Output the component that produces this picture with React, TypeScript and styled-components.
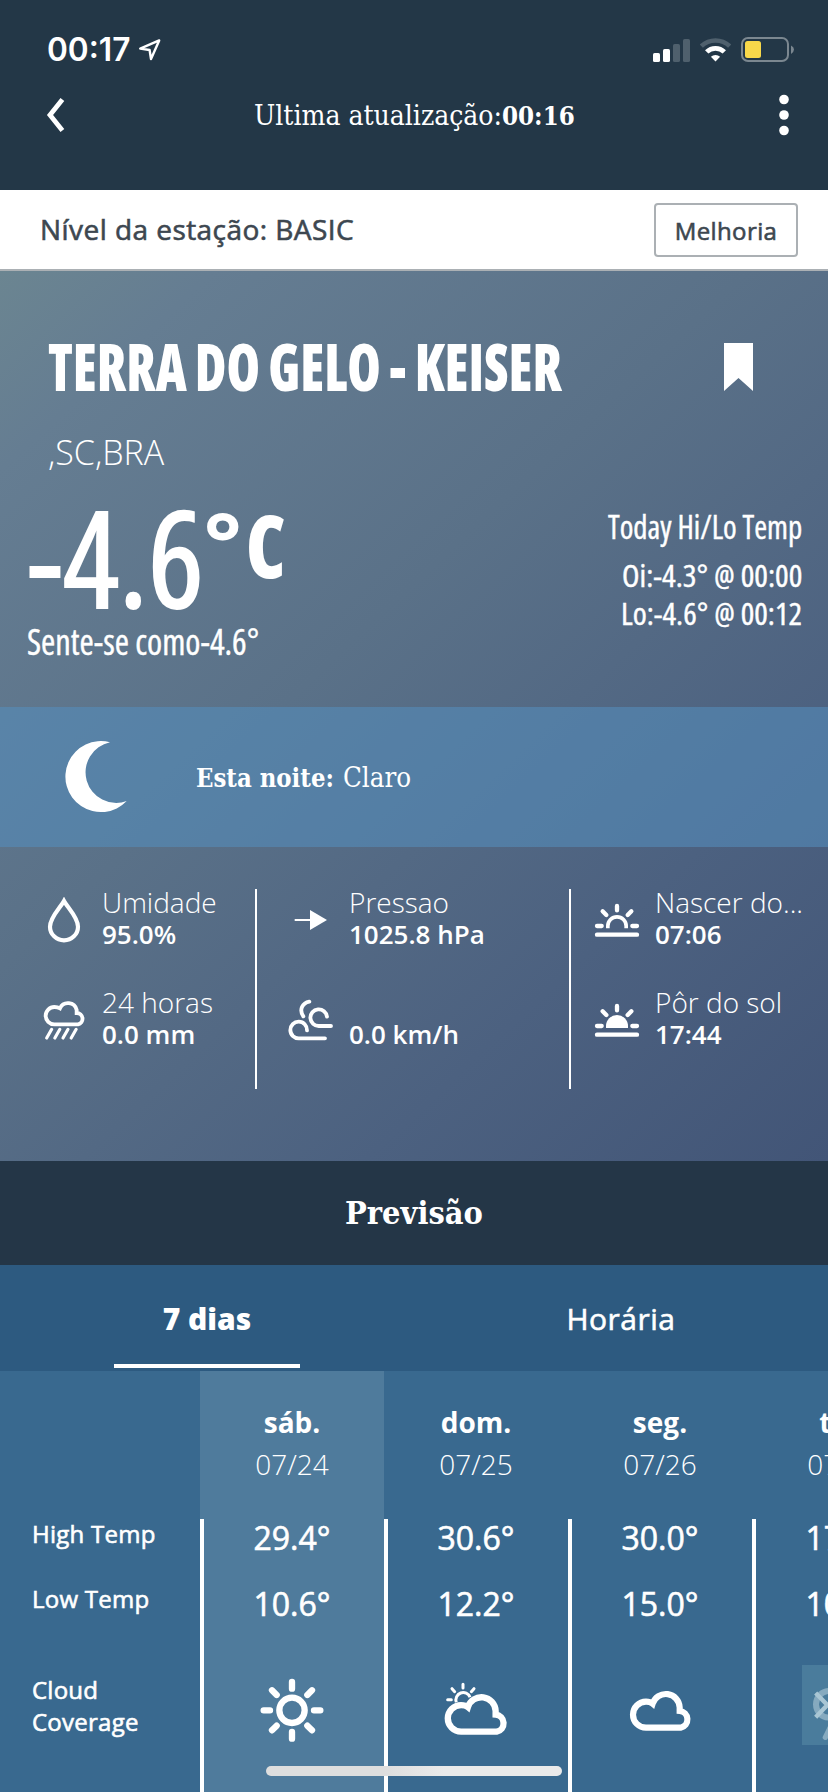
import React, { ReactNode, useLayoutEffect, useRef, useState } from "react";
import styled, { createGlobalStyle, css } from "styled-components";

const SANS = '"Open Sans", "Noto Sans", sans-serif';
const NARROW = '"Open Sans", "Liberation Sans Narrow", sans-serif';
const SERIF = '"DejaVu Serif Condensed", "DejaVu Serif", serif';

const GlobalStyle = createGlobalStyle`
  * { box-sizing: border-box; }
  html, body { margin: 0; padding: 0; }
  body { width: 828px; height: 1792px; overflow: hidden; background: #39698f; color: #fff; font-family: ${SANS}; }
`;

/* Open Sans has no installed 500 weight; a hairline stroke thickens the regular. */
const medium = css`
  font-weight: 400;
  -webkit-text-stroke: 0.6px currentColor;
`;

type FitProps = {
  w: number;
  size: number;
  lh: number;
  family?: string;
  weight?: number;
  stretch?: number;
  stroke?: number;
  words?: number;
  children: ReactNode;
};

const FitBox = styled.span<{ $w: number; $lh: number }>`
  display: block;
  flex: none;
  width: ${(p) => p.$w}px;
  height: ${(p) => p.$lh}px;
  line-height: ${(p) => p.$lh}px;
  white-space: pre;
`;
const FitInner = styled.span<{
  $size: number;
  $family: string;
  $weight: number;
  $stretch: number;
  $stroke: number;
  $words: number;
}>`
  display: inline-block;
  vertical-align: top;
  transform-origin: 0 0;
  font-family: ${(p) => p.$family};
  font-size: ${(p) => p.$size}px;
  font-weight: ${(p) => p.$weight};
  font-stretch: ${(p) => p.$stretch}%;
  word-spacing: ${(p) => p.$words}em;
  -webkit-text-stroke: ${(p) => p.$stroke}px currentColor;
`;

/* One line of text condensed horizontally to an exact width. */
function Fit({
  w,
  size,
  lh,
  family = NARROW,
  weight = 400,
  stretch = 100,
  stroke = 0,
  words = 0,
  children,
}: FitProps) {
  const ref = useRef<HTMLSpanElement>(null);
  const [scale, setScale] = useState(1);
  useLayoutEffect(() => {
    if (ref.current) setScale(w / ref.current.offsetWidth);
  }, [w]);
  return (
    <FitBox $w={w} $lh={lh}>
      <FitInner
        ref={ref}
        $size={size}
        $family={family}
        $weight={weight}
        $stretch={stretch}
        $stroke={stroke}
        $words={words}
        style={{ transform: `scaleX(${scale})` }}
      >
        {children}
      </FitInner>
    </FitBox>
  );
}

const Screen = styled.main`
  width: 828px;
  height: 1792px;
  overflow: hidden;
  display: flex;
  flex-direction: column;
`;

/* ---------- header ---------- */
const Header = styled.header`
  height: 190px;
  flex: none;
  background: #233747;
`;
const StatusBar = styled.div`
  height: 80px;
  padding: 20px 34px 0 47px;
  display: flex;
  align-items: center;
  justify-content: space-between;
`;
const StatusGroup = styled.div<{ $gap: number }>`
  display: flex;
  align-items: center;
  gap: ${(p) => p.$gap}px;
`;
const NavBar = styled.nav`
  height: 70px;
  padding: 0 36px 0 46px;
  display: flex;
  align-items: center;
  justify-content: space-between;
`;
const NavTitle = styled.h1`
  margin: 0;
  display: flex;
  padding: 2px 14px 0 0;
`;

/* ---------- station level ---------- */
const LevelBar = styled.section`
  height: 81px;
  flex: none;
  background: #fff;
  border-bottom: 2px solid #abb0b4;
  padding: 0 30px 0 40px;
  display: flex;
  align-items: center;
  justify-content: space-between;
  color: #3d4750;
`;
const LevelText = styled.span`
  font-size: 28px;
  letter-spacing: 0.45px;
  padding-bottom: 2px;
  ${medium}
`;
const UpgradeButton = styled.button`
  width: 144px;
  height: 54px;
  margin-top: 1px;
  padding: 1px 0 0;
  border: 2px solid #abb0b4;
  border-radius: 4px;
  background: #fff;
  color: #3d4750;
  font-family: ${SANS};
  font-size: 24px;
  letter-spacing: 0.4px;
  ${medium}
`;

/* ---------- current conditions ---------- */
const Hero = styled.section`
  height: 890px;
  flex: none;
  background: linear-gradient(137deg, #6b8591 0%, #657d92 12%, #5a7188 42%, #4c6180 74%, #425577 100%);
`;
const Summary = styled.div`
  height: 436px;
`;
const TitleRow = styled.div`
  height: 132px;
  padding: 49px 75px 0 48px;
  display: flex;
  justify-content: space-between;
`;
const BookmarkIcon = styled.svg`
  margin-top: 23px;
`;
const Region = styled.p`
  margin: 0;
  padding-left: 48px;
  height: 90px;
  line-height: 98px;
  font-size: 34px;
  font-weight: 300;
`;
const TempRow = styled.div`
  display: flex;
  justify-content: space-between;
  padding: 0 26px 0 27px;
`;
const TempBlock = styled.div`
  height: 192px;
`;
const BigTemp = styled.div`
  display: flex;
  height: 120px;
`;
const Unit = styled.div`
  display: flex;
  gap: 4px;
`;
const HiLo = styled.div`
  display: flex;
  flex-direction: column;
  align-items: flex-end;
  padding-top: 14px;
`;
const HiLoRows = styled.div`
  display: flex;
  flex-direction: column;
  align-items: flex-end;
  margin-top: 9px;
`;
const Tonight = styled.div`
  height: 140px;
  background: rgba(84, 141, 188, 0.58);
  display: flex;
  align-items: center;
  padding-left: 62px;
`;
const TonightText = styled.p`
  margin: 1px 0 0 65px;
  display: flex;
  gap: 9px;
`;
const Stats = styled.div`
  display: flex;
  padding-top: 42px;
`;
const StatColumn = styled.div<{ $w: number; $line?: boolean }>`
  width: ${(p) => p.$w}px;
  height: 200px;
  flex: none;
  border-right: ${(p) => (p.$line ? "2px solid #fff" : "0")};
`;
const Stat = styled.div<{ $icon: number }>`
  height: 100px;
  display: grid;
  grid-template-columns: ${(p) => p.$icon}px 1fr;
`;
const StatIcon = styled.div<{ $left: number }>`
  padding-left: ${(p) => p.$left}px;
  height: 62px;
  display: flex;
  align-items: center;
`;
const StatLabel = styled.div`
  height: 29px;
  line-height: 27px;
  font-size: 28px;
  font-weight: 300;
  white-space: nowrap;
`;
const StatValue = styled.div`
  height: 32px;
  line-height: 32px;
  font-size: 26px;
  font-weight: 600;
  white-space: nowrap;
`;

/* ---------- forecast ---------- */
const ForecastTitle = styled.h2`
  margin: 0;
  height: 104px;
  flex: none;
  background: #243647;
  display: flex;
  align-items: center;
  justify-content: center;
`;
const Tabs = styled.div`
  height: 106px;
  flex: none;
  background: #2d5a80;
  display: flex;
`;
const Tab = styled.div`
  width: 414px;
  height: 103px;
  display: flex;
  justify-content: center;
`;
const TabLabel = styled.span<{ $active?: boolean }>`
  width: 186px;
  line-height: 107px;
  height: 103px;
  text-align: center;
  font-size: 30px;
  ${(p) =>
    p.$active
      ? css`
          font-weight: 800;
          border-bottom: 4px solid #fff;
        `
      : css`
          letter-spacing: 0.5px;
          ${medium}
        `}
`;
const Table = styled.section`
  position: relative;
  flex: 1;
  display: flex;
  background: #39698f;
`;
const Labels = styled.div`
  width: 200px;
  flex: none;
  padding: 147px 0 0 32px;
  font-size: 24px;
  letter-spacing: 0.25px;
  line-height: 32px;
  ${medium}
`;
const RowLabel = styled.div<{ $h: number }>`
  height: ${(p) => p.$h}px;
`;
const Day = styled.div<{ $today?: boolean }>`
  width: 184px;
  flex: none;
  background: ${(p) => (p.$today ? "#4f7b9c" : "transparent")};
  text-align: center;
  display: flex;
  flex-direction: column;
`;
const DayHead = styled.div`
  height: 148px;
  padding-top: 30px;
`;
const DayName = styled.div`
  font-size: 28px;
  font-weight: 700;
  line-height: 42px;
`;
const DayDate = styled.div`
  font-size: 28px;
  font-weight: 300;
  line-height: 42px;
`;
const DayBody = styled.div`
  flex: 1;
  border-left: 4px solid #fff;
  padding-right: 4px;
`;
const Temp = styled.div`
  height: 66px;
  line-height: 38px;
  font-size: 32px;
  ${medium}
`;
const DayIcon = styled.div`
  margin-top: 14px;
  height: 80px;
  display: flex;
  justify-content: center;
`;
const HomeIndicator = styled.div`
  position: absolute;
  left: 266px;
  bottom: 16px;
  width: 296px;
  height: 10px;
  border-radius: 5px;
  background: linear-gradient(90deg, #dedede 0 40%, #eaeaea 60%);
`;

/* ---------- icons ---------- */
const line = { fill: "none", stroke: "#fff", strokeLinecap: "round" as const };

const LocationArrow = () => (
  <svg width="24" height="24" viewBox="0 0 24 24">
    <path d="M21.2 2.4 L2.2 10.6 L11.6 12 L13 21 Z" fill="none" stroke="#fff" strokeWidth="2.4" strokeLinejoin="round" />
  </svg>
);
const Signal = () => (
  <svg width="37" height="23" viewBox="0 0 37 23">
    <rect x="0" y="14" width="7" height="9" rx="1.6" fill="#fff" />
    <rect x="10" y="10" width="7" height="13" rx="1.6" fill="#fff" />
    <rect x="20" y="5" width="7" height="18" rx="1.6" fill="#4f606d" />
    <rect x="30" y="0" width="7" height="23" rx="1.6" fill="#4f606d" />
  </svg>
);
const Wifi = () => (
  <svg width="31" height="24" viewBox="0.5 0 31 24">
    <path d="M1.8 8.2 A20.5 20.5 0 0 1 30.2 8.2" fill="none" stroke="#4f606d" strokeWidth="4.6" />
    <path d="M7.2 13.9 A12.6 12.6 0 0 1 24.8 13.9" fill="none" stroke="#fff" strokeWidth="4.8" />
    <path d="M11.4 18.8 A6.8 6.8 0 0 1 20.6 18.8 L16 23.6 Z" fill="#fff" />
  </svg>
);
const Battery = () => (
  <svg width="53" height="26" viewBox="0 0 53 26">
    <rect x="1" y="1" width="46" height="23" rx="6" fill="none" stroke="#7b8790" strokeWidth="2" />
    <rect x="4" y="4" width="16" height="17" rx="2.5" fill="#f8d84a" />
    <path d="M50 8.5 Q53 10 53 12.5 T50 17 Z" fill="#7b8790" />
  </svg>
);
const BackIcon = () => (
  <svg width="20" height="34" viewBox="0 0 20 34">
    <path d="M16.4 1.5 L4 17 L16.4 32.5" fill="none" stroke="#fff" strokeWidth="4.8" />
  </svg>
);
const MoreIcon = () => (
  <svg width="16" height="42" viewBox="0 0 16 42">
    <circle cx="8" cy="5.5" r="4.8" fill="#fff" />
    <circle cx="8" cy="21" r="4.8" fill="#fff" />
    <circle cx="8" cy="36.5" r="4.8" fill="#fff" />
  </svg>
);
const Moon = () => (
  <svg width="69" height="76" viewBox="62 739 69 76">
    <path d="M110 742.3 A35.5 35.5 0 1 0 126.7 801 A30.6 30.6 0 1 1 110 742.3 Z" fill="#fff" />
  </svg>
);
const Drop = () => (
  <svg width="34" height="46" viewBox="141 591 102 138">
    <path d="M192 603 C182 622 150 652 150 680 A42 41 0 0 0 234 680 C234 652 202 622 192 603 Z" fill="none" stroke="#fff" strokeWidth="12.5" />
  </svg>
);
const Rain = () => (
  <svg width="44" height="42" viewBox="126 897 132 126">
    <path d="M163 973 A26 26 0 0 1 163 921 Q173 921 180 925 A26.5 26.5 0 0 1 230 930 V939 A17.2 17.2 0 0 1 234 973 Z" fill="none" stroke="#fff" strokeWidth="11.5" />
    {[0, 24.5, 49, 73.5].map((x) => (
      <path key={x} d={`M${155 + x} 988 L${140 + x} 1014`} {...line} strokeWidth="9.5" />
    ))}
  </svg>
);
const PressureArrow = () => (
  <svg width="34" height="22" viewBox="882 627 102 66">
    <path d="M884 660 H934" stroke="#fff" strokeWidth="6" />
    <path d="M930 630 L981 660 L930 690 Z" fill="#fff" />
  </svg>
);
const Wind = () => (
  <svg width="46" height="42" viewBox="864 897 138 126">
    <path d="M928 905 C908 909 896 928 910 949" {...line} strokeWidth="11.5" />
    <path d="M981 950 A25 25 0 1 0 957 978 H993" {...line} strokeWidth="11.5" />
    <path d="M921 991 A25 25 0 1 0 897 1015 H975" {...line} strokeWidth="11.5" />
  </svg>
);
const SunHorizon = ({ filled }: { filled?: boolean }) => (
  <svg width="46" height="35" viewBox="540 187 138 105">
    <path d="M549 282 H669 M609 196 V209 M566 212 L577 223 M652 212 L641 223 M549 256 H563 M655 256 H669" {...line} strokeWidth="13" />
    {filled ? (
      <path d="M576 262 V256 A33 33 0 0 1 642 256 V262 Z" fill="#fff" />
    ) : (
      <path d="M581.5 263 V256 A27.5 27.5 0 0 1 636.5 256 V263" fill="none" stroke="#fff" strokeWidth="11" />
    )}
  </svg>
);
const CLOUD =
  "M694 683 A39 39 0 0 1 694 605 Q707 605 714 611 A41.5 41.5 0 0 1 795 622 V633 A25.3 25.3 0 0 1 798 683 Z";
const Sunny = () => (
  <svg width="64" height="80" viewBox="780 495 192 240">
    <circle cx="876" cy="631" r="38" fill="none" stroke="#fff" strokeWidth="19" />
    <path d="M876 546 V566 M876 696 V716 M791 631 H810 M942 631 H961 M816 571 L830 585 M936 571 L922 585 M816 691 L830 677 M936 691 L922 677" {...line} strokeWidth="19" />
  </svg>
);
const PartlyCloudy = () => (
  <svg width="66" height="80" viewBox="87 495 198 240">
    <path d="M127 607 A21 21 0 1 1 168 592" fill="none" stroke="#fff" strokeWidth="9" />
    <path d="M147 553 V564 M114 566 L122 575 M180 566 L172 575 M101 599 H112" {...line} strokeWidth="9" />
    <g transform="translate(-570 -5) scale(1.025)">
      <path d={CLOUD} fill="none" stroke="#fff" strokeWidth="18.5" />
    </g>
  </svg>
);
const Cloudy = () => (
  <svg width="64" height="80" viewBox="640 495 192 240">
    <path d={CLOUD} fill="none" stroke="#fff" strokeWidth="18.5" />
  </svg>
);
const MissingTile = styled.div`
  width: 84px;
  height: 80px;
  flex: none;
  background: #4a7c9c;
`;
const Missing = () => (
  <MissingTile>
    <svg width="84" height="80" viewBox="1164 495 252 240">
      <circle cx="1246" cy="613" r="40" fill="none" stroke="#86aabf" strokeWidth="18" />
      <path d="M1234 712 L1260 660" stroke="#86aabf" strokeWidth="16" strokeLinecap="round" />
      <path d="M1205 579 L1240 615 L1205 652" fill="none" stroke="#a9c6d4" strokeWidth="13" />
    </svg>
  </MissingTile>
);

const days = [
  { name: "sáb.", date: "07/24", hi: "29.4°", lo: "10.6°", icon: <Sunny />, today: true },
  { name: "dom.", date: "07/25", hi: "30.6°", lo: "12.2°", icon: <PartlyCloudy /> },
  { name: "seg.", date: "07/26", hi: "30.0°", lo: "15.0°", icon: <Cloudy /> },
  { name: "ter.", date: "07/27", hi: "17.0°", lo: "10.0°", icon: <Missing /> },
];

export default function App() {
  return (
    <Screen>
      <GlobalStyle />
      <Header>
        <StatusBar>
          <StatusGroup $gap={8}>
            <Fit w={83} size={32} lh={40} family="Inter, sans-serif" weight={600}>00:17</Fit>
            <LocationArrow />
          </StatusGroup>
          <StatusGroup $gap={10}>
            <Signal />
            <Wifi />
            <Battery />
          </StatusGroup>
        </StatusBar>
        <NavBar>
          <BackIcon />
          <NavTitle>
            <Fit w={248} size={27} lh={40} family={SERIF}>Ultima atualização:</Fit>
            <Fit w={73} size={26} lh={40} family={SERIF} weight={700}>00:16</Fit>
          </NavTitle>
          <MoreIcon />
        </NavBar>
      </Header>

      <LevelBar>
        <LevelText>Nível da estação: BASIC</LevelText>
        <UpgradeButton>Melhoria</UpgradeButton>
      </LevelBar>

      <Hero>
        <Summary>
          <TitleRow>
            <Fit w={514} size={66} lh={90} weight={800} stretch={75} words={-0.025}>TERRA DO GELO - KEISER</Fit>
            <BookmarkIcon width="29" height="48" viewBox="0 0 29 48">
              <path d="M0 0 H29 V48 L14.5 35 L0 48 Z" fill="#fff" />
            </BookmarkIcon>
          </TitleRow>
          <Region>,SC,BRA</Region>
          <TempRow>
            <TempBlock>
              <BigTemp>
                <Fit w={177} size={133} lh={127} weight={400} stretch={75} stroke={2}>-4.6</Fit>
                <Unit>
                  <Fit w={38} size={92} lh={106} weight={400} stretch={75} stroke={3}>°</Fit>
                  <Fit w={40} size={86} lh={104} weight={800} stretch={75}>C</Fit>
                </Unit>
              </BigTemp>
              <Fit w={232} size={36} lh={58} stretch={75} stroke={0.4}>Sente-se como-4.6°</Fit>
            </TempBlock>
            <HiLo>
              <Fit w={194} size={33} lh={40} stretch={75} stroke={0.4}>Today Hi/Lo Temp</Fit>
              <HiLoRows>
                <Fit w={180} size={31} lh={38} stretch={75} stroke={0.4}>Oi:-4.3° @ 00:00</Fit>
                <Fit w={181} size={31} lh={38} stretch={75} stroke={0.4}>Lo:-4.6° @ 00:12</Fit>
              </HiLoRows>
            </HiLo>
          </TempRow>
        </Summary>

        <Tonight>
          <Moon />
          <TonightText>
            <Fit w={138} size={26} lh={40} family={SERIF} weight={700}>Esta noite:</Fit>
            <Fit w={68} size={27} lh={40} family={SERIF}>Claro</Fit>
          </TonightText>
        </Tonight>

        <Stats>
          <StatColumn $w={257} $line>
            <Stat $icon={102}>
              <StatIcon $left={47}><Drop /></StatIcon>
              <div><StatLabel>Umidade</StatLabel><StatValue>95.0%</StatValue></div>
            </Stat>
            <Stat $icon={102}>
              <StatIcon $left={42}><Rain /></StatIcon>
              <div><StatLabel>24 horas</StatLabel><StatValue>0.0 mm</StatValue></div>
            </Stat>
          </StatColumn>
          <StatColumn $w={314} $line>
            <Stat $icon={92}>
              <StatIcon $left={37}><PressureArrow /></StatIcon>
              <div><StatLabel>Pressao</StatLabel><StatValue>1025.8 hPa</StatValue></div>
            </Stat>
            <Stat $icon={92}>
              <StatIcon $left={31}><Wind /></StatIcon>
              <div><StatLabel /><StatValue>0.0 km/h</StatValue></div>
            </Stat>
          </StatColumn>
          <StatColumn $w={257}>
            <Stat $icon={84}>
              <StatIcon $left={23}><SunHorizon /></StatIcon>
              <div><StatLabel>Nascer do...</StatLabel><StatValue>07:06</StatValue></div>
            </Stat>
            <Stat $icon={84}>
              <StatIcon $left={23}><SunHorizon filled /></StatIcon>
              <div><StatLabel>Pôr do sol</StatLabel><StatValue>17:44</StatValue></div>
            </Stat>
          </StatColumn>
        </Stats>
      </Hero>

      <ForecastTitle>
        <Fit w={138} size={32} lh={44} family={SERIF} weight={700}>Previsão</Fit>
      </ForecastTitle>
      <Tabs>
        <Tab><TabLabel $active>7 dias</TabLabel></Tab>
        <Tab><TabLabel>Horária</TabLabel></Tab>
      </Tabs>
      <Table>
        <Labels>
          <RowLabel $h={65}>High Temp</RowLabel>
          <RowLabel $h={91}>Low Temp</RowLabel>
          <RowLabel $h={64}>Cloud<br />Coverage</RowLabel>
        </Labels>
        {days.map((d) => (
          <Day key={d.name} $today={d.today}>
            <DayHead>
              <DayName>{d.name}</DayName>
              <DayDate>{d.date}</DayDate>
            </DayHead>
            <DayBody>
              <Temp>{d.hi}</Temp>
              <Temp>{d.lo}</Temp>
              <DayIcon>{d.icon}</DayIcon>
            </DayBody>
          </Day>
        ))}
        <HomeIndicator />
      </Table>
    </Screen>
  );
}
